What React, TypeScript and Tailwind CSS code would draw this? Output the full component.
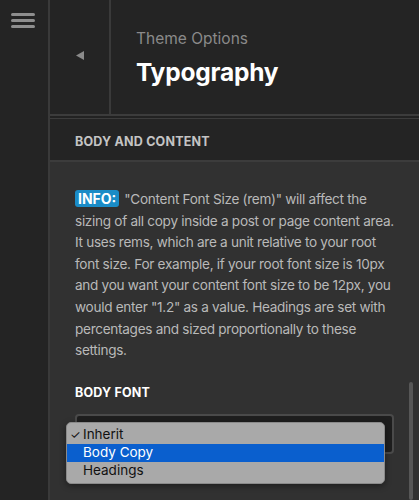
import React from 'react';

const font = { fontFamily: 'Inter, "Noto Sans", sans-serif' };

const lines = [
  'sizing of all copy inside a post or page content area.',
  'It uses rems, which are a unit relative to your root',
  'font size. For example, if your root font size is 10px',
  'and you want your content font size to be 12px, you',
  'would enter "1.2" as a value. Headings are set with',
  'percentages and sized proportionally to these',
  'settings.',
];

export default function App() {
  return (
    <div className="flex h-[500px] w-[419px] overflow-hidden bg-[#242424]" style={font}>
      {/* Sidebar */}
      <div className="flex w-[50px] shrink-0 justify-center border-r-2 border-[#3a3a3a] bg-[#242424] pt-[13px]">
        <div className="ml-[-2px] flex h-[15px] w-[24px] flex-col justify-between">
          <span className="block h-[3px] w-full rounded-sm bg-[#8e8e8e]" />
          <span className="block h-[3px] w-full rounded-sm bg-[#8e8e8e]" />
          <span className="block h-[3px] w-full rounded-sm bg-[#8e8e8e]" />
        </div>
      </div>

      {/* Main */}
      <div className="relative flex min-w-0 flex-1 flex-col">
        {/* Header */}
        <div className="flex h-[114px] shrink-0 bg-[#242424]">
          <div className="flex w-[61px] items-center justify-center border-r-2 border-[#3a3a3a]">
            <svg width="8" height="9" viewBox="0 0 8 9" className="mt-[-4px]">
              <path d="M0 4.5 L8 0 L8 9 Z" fill="#8a8a8a" />
            </svg>
          </div>
          <div className="flex flex-col pl-[25px] pt-[30px]">
            <div className="text-[15.5px] leading-[18px] text-[#8a8a8a]">Theme Options</div>
            <div className="mt-[9px] text-[24.5px] font-bold leading-[30px] tracking-[-0.2px] text-white">Typography</div>
          </div>
        </div>

        {/* double rule */}
        <div className="h-[2px] shrink-0 bg-[#3c3c3c]" />
        <div className="h-[2px] shrink-0 bg-[#222]" />
        <div className="h-[1px] shrink-0 bg-[#3c3c3c]" />

        {/* Section header */}
        <div className="flex h-[41px] shrink-0 items-center bg-[#242424] pl-[25px] pt-[6px]">
          <span className="text-[12.5px] font-bold tracking-[0.2px] text-[#c4c4c4]">BODY AND CONTENT</span>
        </div>
        <div className="h-[2px] shrink-0 bg-[#3c3c3c]" />

        {/* Content */}
        <div className="flex-1 bg-[#313131] px-[25px] pt-[27px]">
          <div className="whitespace-nowrap text-[13.6px] leading-[21.6px] tracking-[-0.3px] text-[#b9b9b9]">
            <div>
              <span className="mr-[5px] inline-block rounded-[3px] bg-[#1a8cc7] px-[3px] text-[14px] font-bold leading-[17px] tracking-normal text-white">
                INFO:
              </span>
              "Content Font Size (rem)" will affect the
            </div>
            {lines.map((l) => (
              <div key={l}>{l}</div>
            ))}
          </div>

          <div className="mt-[22px] text-[12.5px] font-bold tracking-[0.2px] text-white">BODY FONT</div>

          <div className="relative mt-[11px]">
            <div className="h-[40px] w-full rounded-[4px] border-2 border-[#4a4a4a] bg-[#1e1e1e]" />
            {/* open menu */}
            <div className="absolute left-[-9px] top-[8px] w-[319px] rounded-[5px] border border-[#8a8a8a] bg-[#a9a9a9] py-[3px] shadow-[0_2px_6px_rgba(0,0,0,0.4)]">
              <div className="flex h-[18px] items-center text-[13.5px] text-[#111]">
                <span className="w-[16px] pl-[3px] text-[12px]">✓</span>
                <span>Inherit</span>
              </div>
              <div className="flex h-[18px] items-center bg-[#0a5fce] text-[13.5px] text-white">
                <span className="w-[16px]" />
                <span>Body Copy</span>
              </div>
              <div className="flex h-[18px] items-center text-[13.5px] text-[#111]">
                <span className="w-[16px]" />
                <span>Headings</span>
              </div>
            </div>
          </div>
        </div>

        {/* scrollbar */}
        <div className="absolute bottom-0 right-[6px] top-[382px] w-[4px] rounded-full bg-[#575757]" />
      </div>
    </div>
  );
}
